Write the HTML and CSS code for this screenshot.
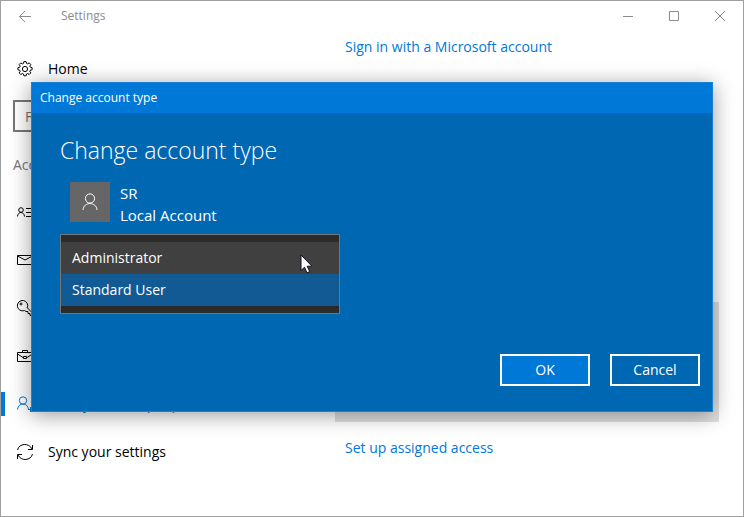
FILE: index.html
```html
<!DOCTYPE html>
<html lang="en">
<head>
<meta charset="utf-8">
<meta name="viewport" content="width=device-width, initial-scale=1">
<title>Settings</title>
<link rel="stylesheet" href="styles.css">
</head>
<body>
<div class="window">
  <header class="titlebar">
    <button class="caption-button back" aria-label="Back">
      <svg width="14" height="12" viewBox="0 0 14 12"><path d="M13 6.500H1.500M7 1L1.500 6.500 7 12"/></svg>
    </button>
    <span class="titlebar-text">Settings</span>
    <button class="caption-button" aria-label="Minimize">
      <svg width="12" height="12" viewBox="0 0 12 12"><path d="M1 6.5h10"/></svg>
    </button>
    <button class="caption-button" aria-label="Maximize">
      <svg width="12" height="12" viewBox="0 0 12 12"><path d="M1.5 1.5h9v9h-9z"/></svg>
    </button>
    <button class="caption-button" aria-label="Close">
      <svg width="12" height="12" viewBox="0 0 12 12"><path d="M1 1l10 10M11 1L1 11"/></svg>
    </button>
  </header>
  <div class="body">
    <nav class="sidebar">
      <a class="nav-item home" href="#home">
        <svg class="icon" viewBox="0 0 16 16"><path d="M6.9.6h2.2l.4 1.8 1.1.5 1.6-1 1.6 1.6-1 1.6.5 1.1 1.8.4v2.2l-1.8.4-.5 1.1 1 1.6-1.6 1.6-1.6-1-1.1.5-.4 1.8H6.9l-.4-1.8-1.1-.5-1.6 1-1.6-1.6 1-1.6-.5-1.1-1.8-.4V6.600l1.8-.4.5-1.100-1-1.600 1.600-1.600 1.600 1 1.100-.500z"/><circle cx="8" cy="8" r="2.600"/></svg>
        <span>Home</span>
      </a>
      <input class="search" type="search" aria-label="Find a setting" placeholder="Find a setting">
      <h2 class="group">Accounts</h2>
      <a class="nav-item" href="#info">
        <svg class="icon" viewBox="0 0 16 16"><circle cx="4" cy="6" r="2.300"/><path d="M.5 12.500c.3-5.300 6.700-5.300 7 0M9 4.500h7M9 8.500h7M9 12.500h7"/></svg>
        <span>Your info</span>
      </a>
      <a class="nav-item" href="#email">
        <svg class="icon" viewBox="0 0 16 16"><path d="M.5 3.500h15v9H.5zM.5 4L8 8l7.500-4"/></svg>
        <span>Email &amp; app accounts</span>
      </a>
      <a class="nav-item" href="#signin">
        <svg class="icon" viewBox="0 0 16 16"><path d="M10.300 7.800A5.200 5.200 0 1 0 7.500 10.500l1.500 1h2v2h2v2h3v-2z"/><circle cx="4" cy="4" r="1"/></svg>
        <span>Sign-in options</span>
      </a>
      <a class="nav-item" href="#work">
        <svg class="icon" viewBox="0 0 16 16"><path d="M.5 4.500h15v9H.5zM5.500 4.500v-2h5v2M.5 6l5.500 3.500M15.500 6L10 9.500M6.500 8.500h3v2h-3z"/></svg>
        <span>Access work or school</span>
      </a>
      <a class="nav-item active" href="#family" aria-current="page">
        <svg class="icon" viewBox="0 0 16 16"><circle cx="6" cy="4.500" r="3.700"/><path d="M.5 13.500c.6-7.300 10.400-7.300 11 0M11 13.500h5M13.500 11v5"/></svg>
        <span>Family &amp; other people</span>
      </a>
      <a class="nav-item" href="#sync">
        <svg class="icon" viewBox="0 0 16 16"><path d="M.5 6C2 -.8 12-1.500 15 5M15.500 1v4.500H11M15.500 10C14 16.800 4 17.500 1 11M.5 15v-4.500H5"/></svg>
        <span>Sync your settings</span>
      </a>
    </nav>
    <main class="content">
      <a class="link" href="#microsoft">Sign in with a Microsoft account</a>
      <div class="user-card"></div>
      <a class="link" href="#assigned">Set up assigned access</a>
    </main>
  </div>

  <section class="dialog" role="dialog" aria-labelledby="dialog-title">
    <div class="dialog-bar">Change account type</div>
    <form class="dialog-body">
      <h1 class="dialog-title" id="dialog-title">Change account type</h1>
      <div class="account">
        <div class="avatar">
          <svg width="16" height="18" viewBox="0 0 16 18"><circle cx="8" cy="5.500" r="4.600"/><path d="M1 17c.6-8.600 13.400-8.600 14 0"/></svg>
        </div>
        <div class="account-text">
          <div>SR</div>
          <div>Local Account</div>
        </div>
      </div>
      <div class="picker">
        <select class="types" size="2" aria-label="Account type">
          <option>Administrator</option>
          <option selected>Standard User</option>
        </select>
        <svg class="pointer" width="13" height="20" viewBox="0 0 13 20"><path d="M1 1v15.500l3.500-3.300 2.500 5.600 2.700-1.200-2.500-5.400H12z"/></svg>
      </div>
      <div class="actions">
        <button class="button primary" type="button">OK</button>
        <button class="button" type="button">Cancel</button>
      </div>
    </form>
  </section>
</div>
</body>
</html>
```
FILE: styles.css
```css
* {
  box-sizing: border-box;
}

body {
  margin: 0;
  font: 14px/22px "Open Sans", "Noto Sans", sans-serif;
  color: #000;
  background: #fff;
}

button,
input,
select {
  font: inherit;
}

svg {
  fill: none;
  stroke: currentColor;
  flex: none;
}

.window {
  position: relative;
  display: flex;
  flex-direction: column;
  min-height: 100vh;
  border: 1px solid #a0a0a0;
  overflow: hidden;
}

.titlebar {
  display: flex;
  align-items: center;
  height: 30px;
  color: #8c8c8c;
}

.titlebar-text {
  flex: 1;
  padding-left: 12px;
  font-size: 12px;
}

.caption-button {
  display: flex;
  align-items: center;
  justify-content: center;
  width: 46px;
  height: 30px;
  padding: 0;
  border: 0;
  background: none;
  color: inherit;
}

.back {
  width: 48px;
}

.body {
  display: flex;
  flex: 1;
}

.sidebar {
  width: 320px;
  padding-top: 14px;
}

.nav-item {
  display: flex;
  align-items: center;
  gap: 15px;
  height: 48px;
  padding-left: 16px;
  color: #000;
  text-decoration: none;
}

.icon {
  width: 16px;
  height: 16px;
  overflow: visible;
}

.active {
  padding-left: 12px;
  color: #0078d7;
}

.active::before {
  content: "";
  width: 4px;
  height: 24px;
  margin: 0 -3px 0 -12px;
  background: #0078d7;
}

.search {
  display: block;
  width: 292px;
  height: 32px;
  margin: 7px 12px 0;
  padding: 0 10px;
  border: 2px solid #767676;
  border-radius: 0;
  background: #fff;
}

.search::placeholder {
  color: #767676;
}

.group {
  margin: 0;
  padding: 22px 12px 12px;
  font-size: 14px;
  font-weight: 400;
  color: #767676;
}

.content {
  flex: 1;
  padding: 5px 24px 0 14px;
}

.link {
  display: block;
  padding-left: 10px;
  color: #0078d7;
  text-decoration: none;
}

.user-card {
  height: 120px;
  margin: 244px 0 15px;
  background: #e0e0e0;
}

.dialog {
  position: absolute;
  top: 81px;
  left: 30px;
  right: 30px;
  border: 1px solid #1a80d6;
  background: #0067b3;
  color: #fff;
  box-shadow: 0 3px 20px rgba(0, 0, 0, 0.4);
}

.dialog-bar {
  padding: 4px 8px;
  font-size: 12px;
  background: #0078d7;
}

.dialog-body {
  padding: 21px 12px 25px 28px;
}

.dialog-title {
  margin: 0 0 16px;
  font-size: 23px;
  line-height: 32px;
  font-weight: 300;
}

.account {
  display: flex;
  gap: 10px;
  padding-left: 10px;
}

.account-text {
  font-size: 15px;
}

.avatar {
  display: flex;
  align-items: center;
  justify-content: center;
  width: 40px;
  height: 40px;
  background: #666;
}

.picker {
  position: relative;
  width: 280px;
  margin-top: 8px;
}

.types {
  display: block;
  width: 100%;
  height: 80px;
  padding: 7px 0;
  border: 1px solid #767676;
  border-radius: 0;
  outline: 0;
  overflow: hidden;
  background: #2b2b2b;
}

.types option {
  min-height: 32px;
  padding: 6px 11px 4px;
  line-height: 22px;
  background: #404040;
  color: #fff;
}

.types option:checked {
  background: linear-gradient(#115a94, #115a94);
  -webkit-text-fill-color: #fff;
}

.pointer {
  position: absolute;
  top: 20px;
  right: 27px;
  fill: #fff;
  stroke: #101020;
}

.actions {
  display: flex;
  justify-content: flex-end;
  gap: 20px;
  margin-top: 40px;
}

.button {
  width: 90px;
  height: 32px;
  padding: 0;
  border: 2px solid #fff;
  background: transparent;
  color: #fff;
}

.primary {
  background: #0078d7;
}
```
